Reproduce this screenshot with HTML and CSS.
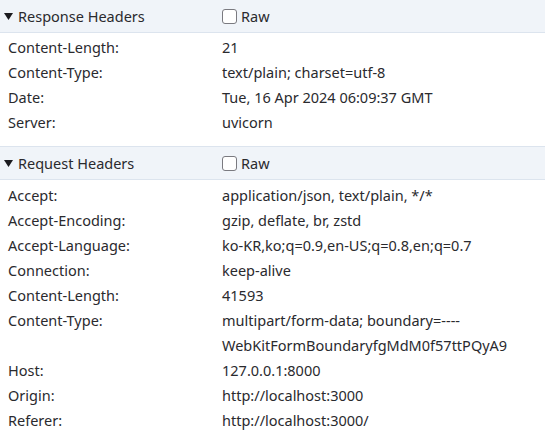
FILE: index.html
```html
<!DOCTYPE html>
<html lang="en">
<head>
<meta charset="utf-8">
<title>Headers</title>
<link rel="stylesheet" href="styles.css">
</head>
<body>
<section class="section">
  <div class="acc-header">
    <div class="acc-title">
      <svg class="arrow" width="9" height="7" viewBox="0 0 9 7"><polygon points="0,0 9,0 4.5,7" fill="#1b1b1f"/></svg>
      <span>Response Headers</span>
    </div>
    <label class="raw"><input type="checkbox" class="check"><span>Raw</span></label>
  </div>
  <div class="rows">
    <div class="name">Content-Length:</div><div class="value">21</div>
    <div class="name">Content-Type:</div><div class="value">text/plain; charset=utf-8</div>
    <div class="name">Date:</div><div class="value">Tue, 16 Apr 2024 06:09:37 GMT</div>
    <div class="name">Server:</div><div class="value">uvicorn</div>
  </div>
</section>
<section class="section second">
  <div class="acc-header">
    <div class="acc-title">
      <svg class="arrow" width="9" height="7" viewBox="0 0 9 7"><polygon points="0,0 9,0 4.5,7" fill="#1b1b1f"/></svg>
      <span>Request Headers</span>
    </div>
    <label class="raw"><input type="checkbox" class="check"><span>Raw</span></label>
  </div>
  <div class="rows">
    <div class="name">Accept:</div><div class="value">application/json, text/plain, */*</div>
    <div class="name">Accept-Encoding:</div><div class="value">gzip, deflate, br, zstd</div>
    <div class="name">Accept-Language:</div><div class="value">ko-KR,ko;q=0.9,en-US;q=0.8,en;q=0.7</div>
    <div class="name">Connection:</div><div class="value">keep-alive</div>
    <div class="name">Content-Length:</div><div class="value">41593</div>
    <div class="name">Content-Type:</div><div class="value">multipart/form-data; boundary=----WebKitFormBoundaryfgMdM0f57ttPQyA9</div>
    <div class="name">Host:</div><div class="value">127.0.0.1:8000</div>
    <div class="name">Origin:</div><div class="value">http://localhost:3000</div>
    <div class="name">Referer:</div><div class="value">http://localhost:3000/</div>
  </div>
</section>
</body>
</html>
```
FILE: styles.css
```css
html, body {
  margin: 0;
  padding: 0;
  background: #ffffff;
}
body {
  font-family: "Noto Sans", "Open Sans", sans-serif;
  font-size: 14.5px;
  color: #2a2a2e;
  width: 545px;
  overflow: hidden;
}
.acc-header {
  display: grid;
  grid-template-columns: 222px 1fr;
  align-items: center;
  height: 32px;
  background: #f0f4f9;
  border-bottom: 1px solid #dce4ee;
}
.second .acc-header {
  border-top: 1px solid #dce4ee;
}
.acc-title {
  display: flex;
  align-items: center;
  padding-left: 4px;
  gap: 5px;
}
.arrow {
  display: block;
}
.raw {
  display: flex;
  align-items: center;
  gap: 4px;
}
.check {
  appearance: none;
  -webkit-appearance: none;
  margin: 0;
  width: 15px;
  height: 15px;
  border: 1px solid #7a7a80;
  border-radius: 3px;
  background: #ffffff;
  box-sizing: border-box;
}
.rows {
  display: grid;
  grid-template-columns: 214px 1fr;
  padding: 2px 0 11px 8px;
  line-height: 25px;
}
.second .rows {
  padding-top: 3px;
}
.value {
  padding-right: 4px;
}
```
